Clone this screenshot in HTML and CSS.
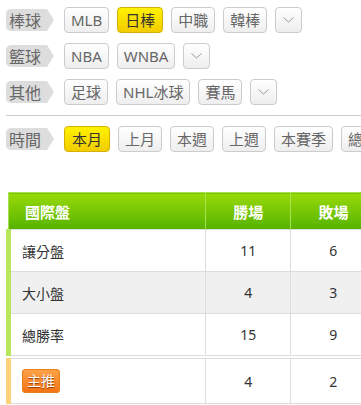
FILE: index.html
```html
<!DOCTYPE html>
<html lang="zh-Hant">
<head>
    <meta charset="UTF-8">
    <meta name="viewport" content="width=device-width, initial-scale=1.0">
    <title>戰績統計</title>
    <link rel="stylesheet" href="styles.css">
</head>
<body>
    <div class="page">
        <div class="filter-row">
            <span class="tag">棒球</span>
            <button class="chip">MLB</button>
            <button class="chip active">日棒</button>
            <button class="chip">中職</button>
            <button class="chip">韓棒</button>
            <button class="chip more"><svg width="11" height="6" viewBox="0 0 11 6"><path d="M0.5 0.5 L5.5 5 L10.5 0.5" fill="none" stroke="#999" stroke-width="1"/></svg></button>
        </div>
        <div class="filter-row">
            <span class="tag">籃球</span>
            <button class="chip">NBA</button>
            <button class="chip">WNBA</button>
            <button class="chip more"><svg width="11" height="6" viewBox="0 0 11 6"><path d="M0.5 0.5 L5.5 5 L10.5 0.5" fill="none" stroke="#999" stroke-width="1"/></svg></button>
        </div>
        <div class="filter-row">
            <span class="tag">其他</span>
            <button class="chip">足球</button>
            <button class="chip">NHL冰球</button>
            <button class="chip">賽馬</button>
            <button class="chip more"><svg width="11" height="6" viewBox="0 0 11 6"><path d="M0.5 0.5 L5.5 5 L10.5 0.5" fill="none" stroke="#999" stroke-width="1"/></svg></button>
        </div>

        <div class="divider"></div>

        <div class="filter-row time-row">
            <span class="tag">時間</span>
            <button class="chip active">本月</button>
            <button class="chip">上月</button>
            <button class="chip">本週</button>
            <button class="chip">上週</button>
            <button class="chip">本賽季</button>
            <button class="chip">總計</button>
        </div>

        <table class="stats">
            <thead>
                <tr>
                    <th class="name-col">國際盤</th>
                    <th>勝場</th>
                    <th>敗場</th>
                </tr>
            </thead>
            <tbody>
                <tr>
                    <td class="name-col">讓分盤</td>
                    <td>11</td>
                    <td>6</td>
                </tr>
                <tr class="alt">
                    <td class="name-col">大小盤</td>
                    <td>4</td>
                    <td>3</td>
                </tr>
                <tr>
                    <td class="name-col">總勝率</td>
                    <td>15</td>
                    <td>9</td>
                </tr>
                <tr class="spacer"><td colspan="3"></td></tr>
                <tr class="pick">
                    <td class="name-col"><span class="badge">主推</span></td>
                    <td>4</td>
                    <td>2</td>
                </tr>
            </tbody>
        </table>
    </div>
</body>
</html>
```

FILE: styles.css
```css
body {
    margin: 0;
    background-color: #ffffff;
    font-family: "Noto Sans", "Noto Sans CJK TC", sans-serif;
    color: #666666;
    overflow: hidden;
}
.page {
    padding: 7px 0 0 6px;
}
.filter-row {
    display: flex;
    align-items: center;
    gap: 8px;
    height: 26px;
    margin-bottom: 10px;
    white-space: nowrap;
}
.tag {
    display: inline-flex;
    align-items: center;
    box-sizing: border-box;
    width: 48px;
    height: 22px;
    padding-left: 3px;
    margin-right: 2px;
    background-color: #dddddd;
    color: #666666;
    font-size: 16px;
    border-radius: 5px 0 0 5px;
    clip-path: polygon(0 0, 41px 0, 48px 50%, 41px 100%, 0 100%);
    flex-shrink: 0;
}
.chip {
    box-sizing: border-box;
    height: 26px;
    padding: 0 6px;
    border: 1px solid #cccccc;
    border-radius: 4px;
    background: linear-gradient(#ffffff, #eeeeee);
    color: #666666;
    font-family: inherit;
    font-size: 15px;
    line-height: 24px;
    flex-shrink: 0;
    cursor: pointer;
}
.chip.active {
    padding: 0 7px;
    background: linear-gradient(#fff200, #f2cc00);
    border-color: #d6b000;
    color: #333333;
}
.chip.more {
    width: 27px;
    padding: 0;
    display: flex;
    align-items: center;
    justify-content: center;
}
.divider {
    height: 1px;
    background-color: #cccccc;
    margin: 0 0 10px 0;
}
.time-row {
    margin-bottom: 40px;
}
.stats {
    border-collapse: collapse;
    width: 370px;
    font-size: 14px;
    color: #333333;
}
.stats th {
    height: 36px;
    padding: 0;
    background: linear-gradient(#99d90a, #55b300);
    color: #ffffff;
    font-weight: bold;
    font-size: 15px;
    border-left: 1px solid #a8e050;
    border-top: 1px solid #a8e050;
    width: 85px;
}
.stats th.name-col {
    width: 199px;
    text-align: left;
    padding-left: 16px;
    box-sizing: border-box;
}
.stats td {
    height: 41px;
    padding: 0;
    text-align: center;
    border: 1px solid #dddddd;
}
.stats td.name-col {
    text-align: left;
    padding-left: 11px;
    border-left: 5px solid #b8e65c;
}
.stats tr.alt td {
    background-color: #f0f0f0;
}
.stats tr.spacer td {
    height: 2px;
    border: none;
    border-left: none;
}
.stats tr.pick td {
    height: 44px;
}
.stats tr.pick td.name-col {
    border-left-color: #ffd27a;
}
.badge {
    display: inline-block;
    padding: 0 4px;
    height: 22px;
    line-height: 22px;
    border: 1px solid #e8801a;
    border-radius: 3px;
    background: linear-gradient(#ffa24a, #f47414);
    color: #ffffff;
    font-size: 14px;
    text-shadow: 0 1px 1px #8a3a00;
}
```
